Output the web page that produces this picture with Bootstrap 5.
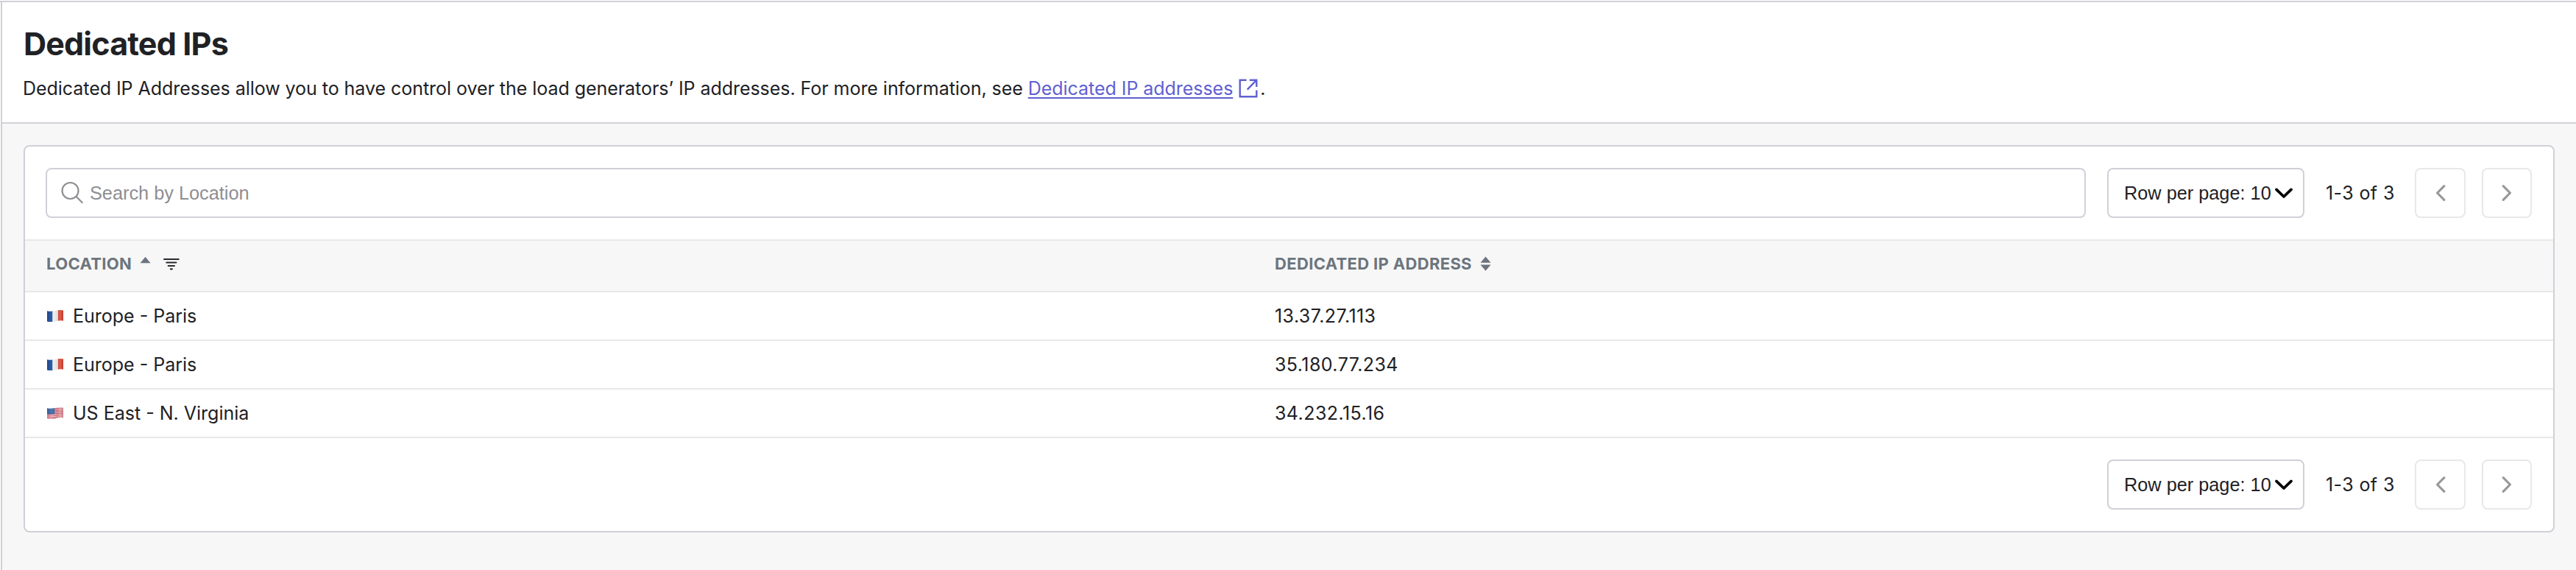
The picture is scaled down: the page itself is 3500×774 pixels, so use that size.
<!DOCTYPE html>
<html lang="en">
<head>
<meta charset="utf-8">
<title>Dedicated IPs</title>
<link href="https://cdn.jsdelivr.net/npm/bootstrap@5.3.0/dist/css/bootstrap.min.css" rel="stylesheet">
<style>
body{font-family:Inter,sans-serif;font-size:25px;line-height:36px;color:#202125;background:#fff;height:774px;overflow:hidden;padding-top:1px}
.page-shell{border-top:2px solid #d0d0d8;height:773px;padding-left:1px}
.page-main{border-left:2px solid #d0d0d8;background:#f7f7f7}
.page-head{background:#fff;border-bottom:2px solid #d0d0d8;padding:29px 28px 28px;height:165px}
.page-head h1{font-size:43px;line-height:54px;letter-spacing:-.8px;margin:0 0 16px 1px;font-weight:700}
.page-head p{letter-spacing:-.045px}
.page-head a{color:#6060d2;text-decoration-thickness:2px;text-underline-offset:3px}
.page-head svg{margin:-4px 3px 0 8px}
.ip-card{margin:29px 29px 0 29px;border:2px solid #d0d0d8;border-radius:8px;background:#fff;overflow:hidden}
.tool-row{padding:29px 29px 29px 28px;height:126px}
.field-box{height:68px;border:2px solid #d0d0d8;border-radius:8px;background:#fff;font-family:"Liberation Sans",Arial,sans-serif;font-size:25.3px}
.search-box{padding-left:19px;color:#8e8e93;margin-right:29px}
.search-box svg{margin-right:7px}
.size-box{width:268px;padding-left:21px}
.size-box svg{margin-left:4px}
.field-box span{margin-top:-1px}
.count-text{width:150px;padding-left:29px;letter-spacing:.4px}
.page-btn,.page-btn:disabled{width:69px;height:68px;padding:0;border:2px solid #e8e8e8;border-radius:8px;background:#fff;opacity:1}
.page-btn + .page-btn{margin-left:22px;width:68px}
.ip-table{table-layout:fixed;width:100%;margin:0;border-collapse:separate;border-spacing:0}
.ip-table th,.ip-table td{padding:0 28px;border-bottom:2px solid #e8e8e8;vertical-align:middle}
.ip-table th{height:72px;background:#f7f7f7;border-top:2px solid #e8e8e8;color:#6c757d;font-size:22px;letter-spacing:.34px;font-weight:700;padding-bottom:7px;padding-left:29px;line-height:30px}
.ip-table td{height:66px}
.ip-table th:first-child{width:1669px}
.ip-table td:last-child{letter-spacing:.43px;padding-left:29px}
.flag-icon{margin:0 13px 0 2px}
svg{display:block;flex:none}
.page-head svg{display:inline-block;vertical-align:middle}
.filter-icon{margin-left:12px}
</style>
</head>
<body>
<svg width="0" height="0" class="position-absolute">
  <defs>
    <linearGradient id="wave" x1="0" x2="1"><stop offset="0" stop-color="#000" stop-opacity=".12"/><stop offset=".3" stop-color="#fff" stop-opacity=".08"/><stop offset=".62" stop-color="#000" stop-opacity=".08"/><stop offset=".8" stop-color="#fff" stop-opacity=".12"/><stop offset="1" stop-color="#000" stop-opacity=".12"/></linearGradient>
    <clipPath id="cloth"><path d="M0 1.2C4 2.4 8 1.5 12 .7S19-.1 22 .6V14.800C19 14 16 14.300 12 15.200S4 16.500 0 15.500Z"/></clipPath>
    <symbol id="fr" viewBox="0 0 22 17"><g clip-path="url(#cloth)"><path fill="#f4f4f4" d="M0 0h22v17H0z"/><path fill="#1f4f9c" d="M0 0h7.300v17H0z"/><path fill="#dc4434" d="M14.900 0H22v17h-7.100z"/><path fill="url(#wave)" d="M0 0h22v17H0z"/></g></symbol>
    <symbol id="us" viewBox="0 0 22 17"><g clip-path="url(#cloth)"><path fill="#f3dfe2" d="M0 0h22v17H0z"/><path d="M0 2.400C7 4 14 .2 22 1.500M0 4.700C7 6.300 14 2.500 22 3.800M0 7C7 8.600 14 4.800 22 6.100M0 9.300C7 10.900 14 7.100 22 8.400M0 11.600C7 13.200 14 9.400 22 10.700M0 13.900C7 15.500 14 11.700 22 13M0 16.200C7 17.600 14 14 22 15.300" fill="none" stroke="#d24b5d" stroke-width="1.200"/><path fill="#3e69a8" d="M0 0h10.300v8.900Q5 10.300 0 9.300z"/><path fill="url(#wave)" d="M0 0h22v17H0z"/></g></symbol>
    <symbol id="down" viewBox="0 0 26 16"><path d="M3 3.400l10 9.600 10-9.600" fill="none" stroke="#000" stroke-width="3.800" stroke-linecap="round" stroke-linejoin="round"/></symbol>
    <symbol id="prev" viewBox="0 0 14 24"><path d="M11.800 2.600L2.600 12l9.200 9.400" fill="none" stroke="#999" stroke-width="3.200" stroke-linecap="round" stroke-linejoin="round"/></symbol>
    <symbol id="next" viewBox="0 0 14 24"><path d="M2.200 2.600L11.400 12l-9.200 9.400" fill="none" stroke="#999" stroke-width="3.200" stroke-linecap="round" stroke-linejoin="round"/></symbol>
  </defs>
</svg>
<div class="page-shell d-flex">
<main class="page-main flex-grow-1">
  <header class="page-head">
    <h1>Dedicated IPs</h1>
    <p class="m-0 text-nowrap">Dedicated IP Addresses allow you to have control over the load generators’ IP addresses. For more information, see <a href="#">Dedicated IP addresses</a><svg width="26" height="26" viewBox="0 0 26 26" fill="none" stroke="#6060d2" stroke-width="2.400"><path d="M10.500 1.700H1.700V24.300H24.300V15.500M14.800 1.700H24.300V11M24.300 1.700L11.700 14.600"/></svg>.</p>
  </header>
  <section class="ip-card">
    <div class="tool-row d-flex align-items-start">
      <div class="field-box search-box d-flex align-items-center flex-grow-1"><svg width="32" height="32" viewBox="0 0 32 32" fill="none" stroke="#8e8e93" stroke-width="2.200" stroke-linecap="round"><circle cx="12.500" cy="13" r="11"/><path d="M20.500 21l8.200 8"/></svg><span>Search by Location</span></div>
      <div class="field-box size-box d-flex align-items-center"><span>Row per page: 10</span><svg width="26" height="16"><use href="#down"/></svg></div>
      <div class="count-text align-self-center text-nowrap">1-3 of 3</div>
      <button class="btn page-btn d-flex align-items-center justify-content-center" disabled><svg width="14" height="24"><use href="#prev"/></svg></button>
      <button class="btn page-btn d-flex align-items-center justify-content-center" disabled><svg width="14" height="24"><use href="#next"/></svg></button>
    </div>
    <table class="ip-table">
      <thead><tr>
        <th><div class="d-flex align-items-center"><span>LOCATION</span><svg class="ms-2" width="22" height="20" viewBox="0 0 22 20"><path fill="#6c757d" d="M3.500 9.200L10.500.7l7 8.500z"/></svg><svg width="24" height="20" viewBox="0 0 24 20" class="filter-icon" fill="none" stroke="#2a2a2e" stroke-width="2.200" stroke-linecap="round"><path d="M2 4h19.600M5.300 8.500h13M7.700 13h8.200M10.800 17.300h2"/></svg></div></th>
        <th><div class="d-flex align-items-center"><span>DEDICATED IP ADDRESS</span><svg class="ms-2" width="22" height="20" viewBox="0 0 22 20"><path fill="#6c757d" d="M3.500 8.700L10.500.4l7 8.300zM3.500 11.500h14l-7 8.300z"/></svg></div></th>
      </tr></thead>
      <tbody>
        <tr><td><div class="d-flex align-items-center"><svg class="flag-icon" width="22" height="17"><use href="#fr"/></svg>Europe - Paris</div></td><td>13.37.27.113</td></tr>
        <tr><td><div class="d-flex align-items-center"><svg class="flag-icon" width="22" height="17"><use href="#fr"/></svg>Europe - Paris</div></td><td>35.180.77.234</td></tr>
        <tr><td><div class="d-flex align-items-center"><svg class="flag-icon" width="22" height="17"><use href="#us"/></svg>US East - N. Virginia</div></td><td>34.232.15.16</td></tr>
      </tbody>
    </table>
    <div class="tool-row d-flex align-items-start justify-content-end">
      <div class="field-box size-box d-flex align-items-center"><span>Row per page: 10</span><svg width="26" height="16"><use href="#down"/></svg></div>
      <div class="count-text align-self-center text-nowrap">1-3 of 3</div>
      <button class="btn page-btn d-flex align-items-center justify-content-center" disabled><svg width="14" height="24"><use href="#prev"/></svg></button>
      <button class="btn page-btn d-flex align-items-center justify-content-center" disabled><svg width="14" height="24"><use href="#next"/></svg></button>
    </div>
  </section>
</main>
</div>
<script src="https://cdn.jsdelivr.net/npm/bootstrap@5.3.0/dist/js/bootstrap.bundle.min.js"></script>
</body>
</html>
